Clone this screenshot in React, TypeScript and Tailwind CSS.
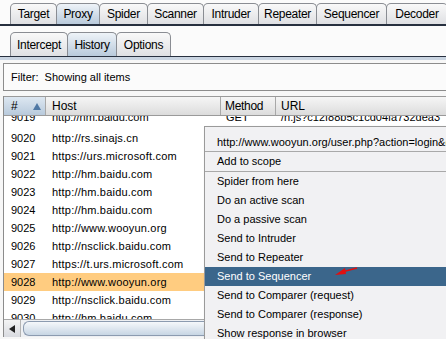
const topTabs = [
  { label: "Target", w: 47 },
  { label: "Proxy", w: 44, active: true },
  { label: "Spider", w: 49 },
  { label: "Scanner", w: 57 },
  { label: "Intruder", w: 56 },
  { label: "Repeater", w: 59 },
  { label: "Sequencer", w: 71 },
  { label: "Decoder", w: 62 },
];

const subTabs = [
  { label: "Intercept", w: 58 },
  { label: "History", w: 50, active: true },
  { label: "Options", w: 55 },
];

const rows = [
  { id: "9020", host: "http://rs.sinajs.cn" },
  { id: "9021", host: "https://urs.microsoft.com" },
  { id: "9022", host: "http://hm.baidu.com" },
  { id: "9023", host: "http://hm.baidu.com" },
  { id: "9024", host: "http://hm.baidu.com" },
  { id: "9025", host: "http://www.wooyun.org" },
  { id: "9026", host: "http://nsclick.baidu.com" },
  { id: "9027", host: "https://t.urs.microsoft.com" },
  { id: "9028", host: "http://www.wooyun.org", selected: true },
  { id: "9029", host: "http://nsclick.baidu.com" },
  { id: "9030", host: "http://hm.baidu.com" },
];

type MenuEntry = { label: string; sep?: boolean; active?: boolean };

const menu: MenuEntry[] = [
  { label: "http://www.wooyun.org/user.php?action=login&do=login" },
  { label: "", sep: true },
  { label: "Add to scope" },
  { label: "", sep: true },
  { label: "Spider from here" },
  { label: "Do an active scan" },
  { label: "Do a passive scan" },
  { label: "Send to Intruder" },
  { label: "Send to Repeater" },
  { label: "Send to Sequencer", active: true },
  { label: "Send to Comparer (request)" },
  { label: "Send to Comparer (response)" },
  { label: "Show response in browser" },
];

function Tab({ label, w, active }: { label: string; w: number; active?: boolean }) {
  return (
    <div
      style={{ width: w }}
      className={`flex items-center justify-center shrink-0 rounded-t-[5px] border border-b-0 border-[#8a8d93] -ml-px first:ml-0 text-[12px] tracking-[-0.3px] ${
        active ? "bg-gradient-to-b from-[#eef3f8] to-[#b9cadb]" : "bg-gradient-to-b from-[#f9f9f9] to-[#dfe0e3]"
      }`}
    >
      {label}
    </div>
  );
}

export default function App() {
  return (
    <div
      className="relative w-[446px] h-[339px] overflow-hidden bg-white text-[11px] text-black leading-none"
      style={{ fontFamily: '"Liberation Sans", Arial, sans-serif' }}
    >
      {/* main tabs */}
      <div className="flex h-[26px] pt-[3px] pl-[10px] border-b-2 border-[#27303f] bg-[#fbfbfb]">
        {topTabs.map((t) => (
          <Tab key={t.label} {...t} />
        ))}
      </div>

      {/* proxy sub tabs */}
      <div className="flex h-[31px] pt-[6px] pl-[10px] border-b border-[#27303f] bg-[#fbfbfb]">
        {subTabs.map((t) => (
          <Tab key={t.label} {...t} />
        ))}
      </div>

      {/* history panel */}
      <div className="flex flex-col border-t-[3px] border-[#c9d4e1] bg-[#f7f7f7] pl-[3px] pt-[3px] h-[282px]">
        <div className="flex items-center h-[28px] pl-[7px] border border-r-0 border-[#8c8c8c] bg-[#fbfbfb]">
          Filter:&nbsp;&nbsp;Showing all items
        </div>

        <div className="mt-[5px] flex flex-col border-l border-[#8c8c8c] bg-white">
          {/* header */}
          <div className="flex h-[20px] border-t border-b border-[#9a9a9a] text-[12px]">
            <div className="flex items-center justify-between w-[42px] pl-[7px] pr-[4px] border-r border-[#a8a8a8] bg-gradient-to-b from-[#dde7f1] to-[#b8cadc]">
              <span>#</span>
              <svg width="8" height="7" viewBox="0 0 8 7">
                <polygon points="4,0 8,7 0,7" fill="#4f78a4" />
              </svg>
            </div>
            <div className="flex items-center w-[175px] pl-[6px] border-r border-[#a8a8a8] bg-gradient-to-b from-[#f6f6f6] to-[#dcdcdc]">
              Host
            </div>
            <div className="flex items-center w-[55px] pl-[4px] border-r border-[#a8a8a8] bg-gradient-to-b from-[#f6f6f6] to-[#dcdcdc] tracking-[-0.3px]">
              Method
            </div>
            <div className="flex items-center flex-1 pl-[5px] bg-gradient-to-b from-[#f6f6f6] to-[#dcdcdc]">
              URL
            </div>
          </div>

          {/* rows */}
          <div className="h-[203px] overflow-hidden">
            {/* row 9019, scrolled half out of view */}
            <div className="h-[13px] overflow-hidden">
              <div className="flex items-center h-[18px] -mt-[8px]">
                <div className="w-[42px] pl-[7px]">9019</div>
                <div className="w-[175px] pl-[6px]">http://hm.baidu.com</div>
                <div className="w-[55px] pl-[5px]">GET</div>
                <div className="flex-1 pl-[5px] whitespace-nowrap">/h.js?c12f88b5c1cd04fa732dea3</div>
              </div>
            </div>
            {rows.map((r) => (
              <div
                key={r.id}
                className={`flex items-center h-[18px] ${r.selected ? "bg-[#ffcc80]" : ""}`}
              >
                <div className="w-[42px] pl-[7px]">{r.id}</div>
                <div className="w-[175px] pl-[6px] tracking-[0.2px] whitespace-nowrap">{r.host}</div>
              </div>
            ))}
          </div>

          {/* horizontal scrollbar */}
          <div className="flex h-[18px] border-t border-[#a8a8a8] bg-[#eef0f3]">
            <div className="flex items-center justify-center w-[17px] border-r border-[#b4b4b4] bg-gradient-to-b from-[#f4f4f4] to-[#d9dbe0]">
              <svg width="6" height="8" viewBox="0 0 6 8">
                <polygon points="0,4 6,0 6,8" fill="#222" />
              </svg>
            </div>
            <div className="ml-[2px] mt-[1px] h-[15px] flex-1 rounded-l-[6px] border border-r-0 border-[#8c9bb0] bg-gradient-to-b from-[#f5f8fb] to-[#c8d6e4]" />
          </div>
        </div>
      </div>

      {/* context menu */}
      <div className="absolute left-[204px] top-[126px] w-[260px] pt-[6px] border border-[#9a9a9a] bg-[#f1f1f3] shadow-[2px_2px_3px_rgba(0,0,0,0.25)]">
        {menu.map((m, i) =>
          m.sep ? (
            <div key={i} className="h-px bg-[#a9a9a9]" />
          ) : (
            <div
              key={i}
              className={`flex items-center pl-[12px] whitespace-nowrap ${i === 0 ? "h-[18px]" : "h-[19px]"} ${
                m.active ? "bg-[#3b668b] text-white" : ""
              }`}
            >
              {m.label}
            </div>
          )
        )}
      </div>

      {/* red annotation arrow */}
      <svg className="absolute left-[330px] top-[264px]" width="32" height="16" viewBox="0 0 32 16">
        <line x1="27" y1="4" x2="12" y2="8" stroke="#e01010" strokeWidth="1.5" />
        <polygon points="5,11 15,4 16,10" fill="#e01010" />
      </svg>
    </div>
  );
}
